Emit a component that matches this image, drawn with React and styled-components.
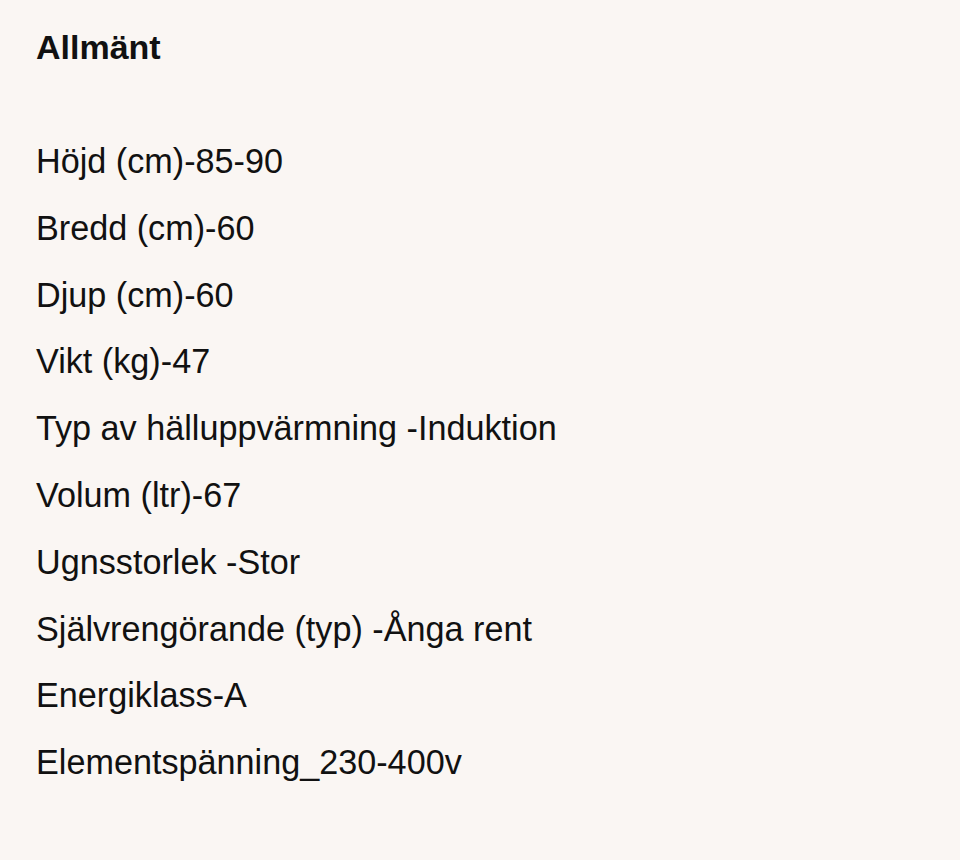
import React from "react";
import styled, { createGlobalStyle } from "styled-components";

const GlobalStyle = createGlobalStyle`
  html, body {
    margin: 0;
    padding: 0;
    background: #faf6f3;
  }
  body {
    font-family: "Liberation Sans", Arial, Helvetica, sans-serif;
    color: #111;
  }
`;

const Page = styled.div`
  min-height: 860px;
  box-sizing: border-box;
  padding: 27px 36px 0;
  background: #faf6f3;
`;

const Heading = styled.h2`
  margin: 0;
  font-size: 34px;
  line-height: 40px;
  font-weight: 700;
`;

const SpecList = styled.ul`
  list-style: none;
  margin: 74px 0 0;
  padding: 0;
  display: flex;
  flex-direction: column;
  gap: 26.8px;
`;

const SpecItem = styled.li`
  font-size: 34.2px;
  line-height: 40px;
  white-space: nowrap;
`;

const specs = [
  "Höjd (cm)-85-90",
  "Bredd (cm)-60",
  "Djup (cm)-60",
  "Vikt (kg)-47",
  "Typ av hälluppvärmning -Induktion",
  "Volum (ltr)-67",
  "Ugnsstorlek -Stor",
  "Självrengörande (typ) -Ånga rent",
  "Energiklass-A",
  "Elementspänning_230-400v",
];

const App = () => (
  <>
    <GlobalStyle />
    <Page>
      <Heading>Allmänt</Heading>
      <SpecList>
        {specs.map((s) => (
          <SpecItem key={s}>{s}</SpecItem>
        ))}
      </SpecList>
    </Page>
  </>
);

export default App;
